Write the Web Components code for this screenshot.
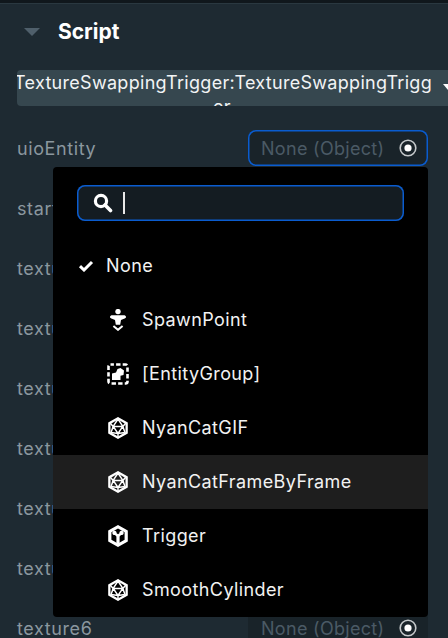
<!DOCTYPE html>
<html>
<head>
<meta charset="utf-8">
<style>
  html, body { margin: 0; height: 100%; overflow: hidden; background: #1e2a32; }
  body { font-family: Inter, "Liberation Sans", sans-serif; }
</style>
</head>
<body>
<script-panel>
  <field-row label="uioEntity" focused></field-row>
  <field-row label="startTexture"></field-row>
  <field-row label="texture0"></field-row>
  <field-row label="texture1"></field-row>
  <field-row label="texture2"></field-row>
  <field-row label="texture3"></field-row>
  <field-row label="texture4"></field-row>
  <field-row label="texture5"></field-row>
  <field-row label="texture6"></field-row>
</script-panel>
<entity-menu>
  <menu-item label="None" checked></menu-item>
  <menu-item label="SpawnPoint" icon="spawn"></menu-item>
  <menu-item label="[EntityGroup]" icon="group"></menu-item>
  <menu-item label="NyanCatGIF" icon="mesh"></menu-item>
  <menu-item label="NyanCatFrameByFrame" icon="mesh" hover></menu-item>
  <menu-item label="Trigger" icon="trigger"></menu-item>
  <menu-item label="SmoothCylinder" icon="mesh"></menu-item>
</entity-menu>

<script>
// icosaedro de los assets, se repite en varios items
const meshIcon = `
  <path fill="#fff" fill-rule="evenodd" d="M11 0 20.8 5.5V16.5L11 22 1.2 16.5V5.5ZM11 2.6 3.5 6.9V15.1L11 19.4 18.5 15.1V6.9Z"/>
  <path fill="none" stroke="#fff" stroke-width="1.5" d="M11 2 6.2 9.4H15.8L11 2ZM3 6 6.2 9.4 4 15.4M19 6 15.8 9.4 18 15.4M6.2 9.4 11 16.4 15.8 9.4M4 15.4 11 16.4 18 15.4M11 16.4V20"/>`;

const icons = {
  mesh: meshIcon,
  trigger: `
    <path fill="#fff" fill-rule="evenodd" d="M11 0 20.8 5.5V16.5L11 22 1.2 16.5V5.5ZM11 3.6 4.4 7.3V14.7L11 18.4 17.6 14.7V7.3Z"/>
    <path fill="#fff" d="M5.4 8.4C5 6.4 6.6 5.4 8 5.8 9.4 6.2 9.6 7.4 9.6 8.2L11 9.2 12.4 8.2C12.4 7.4 12.6 6.2 14 5.8 15.4 5.4 17 6.4 16.6 8.4 16.3 9.6 15 10.2 14 10L12.6 11.6V19H9.4V11.6L8 10C7 10.2 5.7 9.6 5.4 8.4Z"/>`,
  spawn: `
    <circle cx="11" cy="2.6" r="2.7" fill="#fff"/>
    <path fill="#fff" d="M3 8C3 6.6 4.4 6 6 6.2H16C17.6 6 19 6.6 19 8 19 9 18 9.4 17 9.8L14 11 13.2 15.8H8.8L8 11 5 9.8C4 9.4 3 9 3 8Z"/>
    <path fill="none" stroke="#fff" stroke-width="2" d="M6.4 17 11 20.8 15.6 17"/>`,
  group: `
    <rect x="1.5" y="1.5" width="19" height="19" rx="2" fill="none" stroke="#fff" stroke-width="2.6" stroke-dasharray="4.4 2.2" stroke-dashoffset="1"/>
    <path fill="#fff" d="M5 10.5 9 9.5 10.5 6 13.5 5 17 7.5 16.5 12 13.5 12.8 13.5 17H5Z"/>`
};

class ScriptPanel extends HTMLElement {
  constructor() {
    super();
    this.attachShadow({ mode: "open" });
    this.shadowRoot.innerHTML = `
      <style>
        :host { display: block; height: 638px; overflow: hidden; color: #fff; }
        .top { height: 3px; background: #10171c; border-bottom: 1px solid #2a3840; }
        .head { display: flex; align-items: center; height: 46px; margin-top: 5px; padding-left: 24px; }
        .tri { width: 0; height: 0; border-left: 8px solid transparent; border-right: 8px solid transparent; border-top: 8px solid #4f5f6b; }
        h2 { margin: 0 0 0 18px; font-size: 21px; font-weight: 700; line-height: 24px; }
        .select { display: flex; margin: 15px 0 24px 17px; height: 36px; width: 470px; background: #36474f; border-radius: 4px; overflow: hidden; }
        .name { flex: none; width: 416px; margin: 0 0 0 -3px; padding-top: 1px; font-size: 18px; letter-spacing: .3px; line-height: 24px; text-align: center; white-space: nowrap; color: #f2f4f5; }
        .arrow { width: 0; height: 0; margin: 14px 0 0 13px; border-left: 5px solid transparent; border-right: 5px solid transparent; border-top: 6px solid #fff; }
      </style>
      <div class="top"></div>
      <div class="head"><span class="tri"></span><h2>Script</h2></div>
      <div class="select"><div class="name">TextureSwappingTrigger:TextureSwappingTrigg<br>er</div><span class="arrow"></span></div>
      <slot></slot>`;
  }
}

class FieldRow extends HTMLElement {
  constructor() {
    super();
    this.attachShadow({ mode: "open" });
  }
  connectedCallback() {
    const focused = this.hasAttribute("focused");
    this.shadowRoot.innerHTML = `
      <style>
        :host { display: flex; align-items: center; justify-content: space-between; height: 36px; padding: 0 20px 0 17px; margin-bottom: 24px; }
        .label { font-size: 18px; letter-spacing: .6px; color: #8b979f; }
        .field { box-sizing: border-box; display: flex; align-items: center; justify-content: space-between; width: 180px; height: 36px; padding: 0 11px 0 13px; background: #192329; border-radius: 8px; ${focused ? "box-shadow: inset 0 0 0 1.5px #0a5ccf;" : ""} }
        .value { font-size: 18px; letter-spacing: .3px; color: #4b5a65; }
        svg { display: block; }
      </style>
      <span class="label">${this.getAttribute("label")}</span>
      <div class="field"><span class="value">None (Object)</span>
        <svg width="18" height="18" viewBox="0 0 18 18"><circle cx="9" cy="9" r="7.8" fill="none" stroke="#c4c8ca" stroke-width="1.6"/><circle cx="9" cy="9" r="3.6" fill="#fff"/></svg>
      </div>`;
  }
}

class EntityMenu extends HTMLElement {
  constructor() {
    super();
    this.attachShadow({ mode: "open" });
    this.shadowRoot.innerHTML = `
      <style>
        :host { display: block; position: absolute; left: 53px; top: 167px; width: 375px; height: 450px; background: #000; border-radius: 4px; }
        .search { box-sizing: border-box; display: flex; align-items: center; margin: 18px 24px 18px; height: 36px; padding-left: 16px; background: #141c22; box-shadow: inset 0 0 0 1.5px #0a5ccf; border-radius: 8px; }
        .caret { width: 1.5px; height: 22px; margin-left: 10px; background: #e8e8e8; }
        svg { display: block; }
      </style>
      <div class="search">
        <svg width="20" height="20" viewBox="0 0 20 20"><circle cx="8" cy="8" r="5.6" fill="none" stroke="#fff" stroke-width="3.2"/><path d="M12 12 17.5 17.5" stroke="#fff" stroke-width="3.6" stroke-linecap="round"/></svg>
        <span class="caret"></span>
      </div>
      <slot></slot>`;
  }
}

class MenuItem extends HTMLElement {
  constructor() {
    super();
    this.attachShadow({ mode: "open" });
  }
  connectedCallback() {
    const icon = this.getAttribute("icon");
    const checked = this.hasAttribute("checked");
    const mark = checked
      ? `<svg class="check" width="16" height="12" viewBox="0 0 16 12"><path d="M2 6.2 6 10 14 2" fill="none" stroke="#fff" stroke-width="3"/></svg>`
      : "";
    const pic = icon ? `<svg class="pic" width="22" height="22" viewBox="0 0 22 22">${icons[icon]}</svg>` : "";
    this.shadowRoot.innerHTML = `
      <style>
        :host { display: flex; align-items: center; height: 54px; padding-left: ${checked ? 25 : 54}px; font-size: 18px; letter-spacing: .4px; color: #f2f2f2; background: ${this.hasAttribute("hover") ? "#1e1e1e" : "transparent"}; }
        span { margin-top: -1px; }
        .check { margin-right: 12px; }
        .pic { margin-right: 13px; }
      </style>
      ${mark}${pic}<span>${this.getAttribute("label")}</span>`;
  }
}

customElements.define("script-panel", ScriptPanel);
customElements.define("field-row", FieldRow);
customElements.define("entity-menu", EntityMenu);
customElements.define("menu-item", MenuItem);
</script>
</body>
</html>
